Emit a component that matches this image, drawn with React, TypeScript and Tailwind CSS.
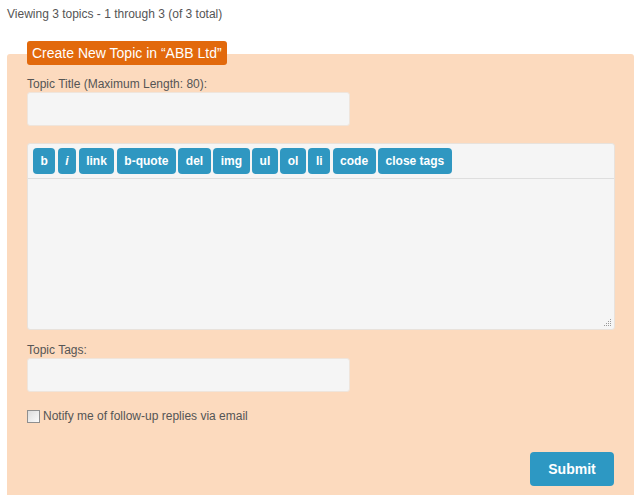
const tools = ["b", "i", "link", "b-quote", "del", "img", "ul", "ol", "li", "code", "close tags"];

const App = () => {
  return (
    <main className="min-h-screen bg-white font-['Liberation_Sans',Arial,sans-serif] text-[12px] text-[#555]">
      <div className="px-[7px] pt-[6px] leading-[16px]">Viewing 3 topics - 1 through 3 (of 3 total)</div>

      <div className="ml-[7px] mr-[5px] mt-[32px] flex flex-col items-start rounded-[3px] bg-[#fcdabe] px-[20px] pb-[30px]">
        <div className="-mt-[13px] rounded-[3px] bg-[#e2690c] px-[5px] text-[14px] leading-[24px] text-white">
          Create New Topic in “ABB Ltd”
        </div>

        <div className="mt-[12px] leading-[14px]">Topic Title (Maximum Length: 80):</div>
        <div className="mt-[1px] h-[34px] w-[323px] rounded-[3px] border border-[#efe5dc] bg-[#f5f5f5]" />

        <div className="mt-[17px] w-[588px] rounded-[3px] border border-[#e8e2dc] bg-[#f5f5f5]">
          <div className="flex gap-[2.5px] border-b border-[#dedede] px-[5px] py-[4px]">
            {tools.map((t) => (
              <span
                key={t}
                className={`flex h-[26px] items-center rounded-[4px] bg-[#2f97c1] px-[7.5px] text-[12px] font-bold text-white ${t === "i" ? "italic" : ""}`}
              >
                {t}
              </span>
            ))}
          </div>
          <div className="relative h-[150px]">
            <svg className="absolute bottom-[2px] right-[2px]" width="8" height="8" viewBox="0 0 8 8">
              <g fill="#9a9a9a">
                <rect x="6" y="0" width="1" height="1" />
                <rect x="4" y="2" width="1" height="1" />
                <rect x="6" y="2" width="1" height="1" />
                <rect x="2" y="4" width="1" height="1" />
                <rect x="4" y="4" width="1" height="1" />
                <rect x="6" y="4" width="1" height="1" />
                <rect x="0" y="6" width="1" height="1" />
                <rect x="2" y="6" width="1" height="1" />
                <rect x="4" y="6" width="1" height="1" />
                <rect x="6" y="6" width="1" height="1" />
              </g>
            </svg>
          </div>
        </div>

        <div className="mt-[13px] leading-[14px]">Topic Tags:</div>
        <div className="mt-[1px] h-[34px] w-[323px] rounded-[3px] border border-[#efe5dc] bg-[#f5f5f5]" />

        <label className="mt-[17px] flex items-center gap-[3px] leading-[14px]">
          <span className="h-[13px] w-[13px] border border-[#8f8f8f] bg-gradient-to-br from-[#dcdcdc] to-[#fbfbfb]" />
          <span>Notify me of follow-up replies via email</span>
        </label>

        <div className="mt-[29px] flex self-stretch justify-end">
          <span className="flex h-[34px] w-[84px] items-center justify-center rounded-[4px] bg-[#2d98c3] text-[14px] font-bold text-white">
            Submit
          </span>
        </div>
      </div>
    </main>
  );
};

export default App;
